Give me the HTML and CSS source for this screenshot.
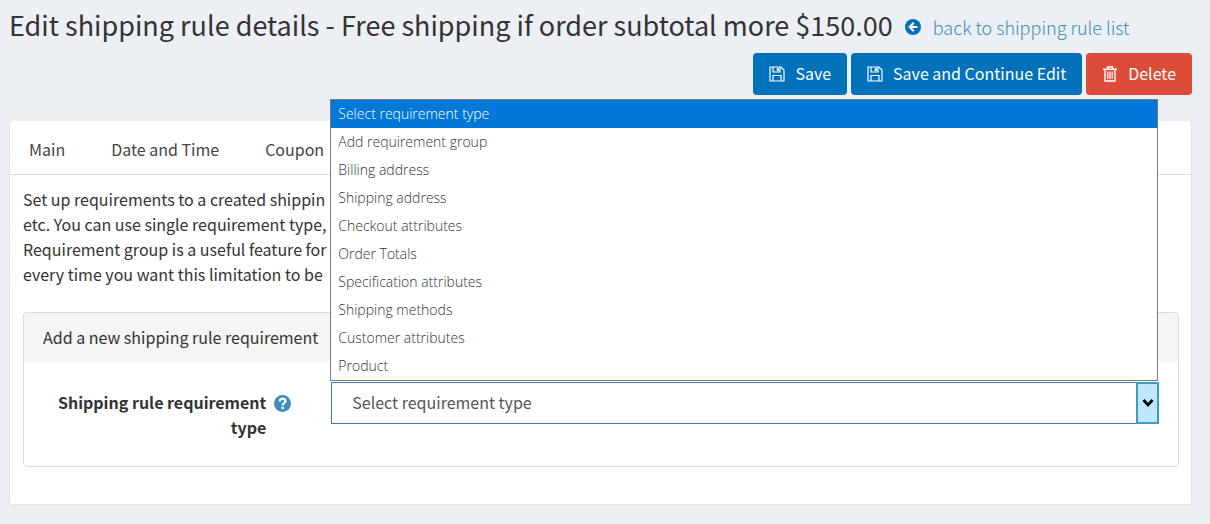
FILE: index.html
```
<!DOCTYPE html>
<html lang="en">
<head>
  <meta charset="UTF-8">
  <title>Edit shipping rule details</title>
  <link rel="stylesheet" href="styles.css">
</head>
<body>
  <header class="content-header">
    <div class="title-row">
      <h1>Edit shipping rule details - Free shipping if order subtotal more $150.00</h1>
      <a href="#" class="back-link">
        <svg class="icon-back" viewBox="0 0 16 16"><circle cx="8" cy="8" r="8" fill="#0072b5"/><path d="M8.8 3.8 4.6 8l4.2 4.2M5 8h7.5" fill="none" stroke="#fff" stroke-width="2"/></svg>
        back to shipping rule list
      </a>
    </div>
    <div class="buttons">
      <button type="button" class="btn btn-blue">
        <svg class="icon" viewBox="0 0 16 16" fill="none" stroke="#fff" stroke-width="1.2"><path d="M1 1h11l3 3v11H1z"/><path d="M4 1v5h7V1M4 15V9.500h8V15"/><path d="M8.800 2v3" stroke-width="2"/></svg>
        Save
      </button>
      <button type="button" class="btn btn-blue">
        <svg class="icon" viewBox="0 0 16 16" fill="none" stroke="#fff" stroke-width="1.2"><path d="M1 1h11l3 3v11H1z"/><path d="M4 1v5h7V1M4 15V9.500h8V15"/><path d="M8.800 2v3" stroke-width="2"/></svg>
        Save and Continue Edit
      </button>
      <button type="button" class="btn btn-red">
        <svg class="icon" viewBox="0 0 16 16" fill="none" stroke="#fff" stroke-width="1.400"><path d="M1 3.200h14M5.500 3V1h5v2"/><path d="M3 3.500V15h10V3.500"/><path d="M5.800 5.500v7.500M8 5.500v7.500M10.200 5.500v7.500" stroke-width="1.200"/></svg>
        Delete
      </button>
    </div>
  </header>

  <main class="card">
    <nav class="tabs">
      <a href="#">Main</a>
      <a href="#">Date and Time</a>
      <a href="#">Coupon</a>
    </nav>
    <div class="tab-content">
      <p class="intro">
        Set up requirements to a created shippin<br>
        etc. You can use single requirement type,<br>
        Requirement group is a useful feature for<br>
        every time you want this limitation to be
      </p>
      <section class="panel">
        <h2>Add a new shipping rule requirement</h2>
        <div class="form-group">
          <div class="label-wrap">
            <label for="requirementType">Shipping rule requirement type</label>
            <svg class="icon-help" viewBox="0 0 18 18"><circle cx="9" cy="9" r="9" fill="#3c8dbc"/><path d="M6 7c0-4 6.200-4 6.200-.6C12.200 8.600 9 8.500 9 11" fill="none" stroke="#fff" stroke-width="2.400"/><path d="M7.800 12.500h2.600v2.500H7.800z" fill="#fff"/></svg>
          </div>
          <div class="select-wrap">
            <select id="requirementType">
              <option>Select requirement type</option>
              <option>Add requirement group</option>
              <option>Billing address</option>
              <option>Shipping address</option>
              <option>Checkout attributes</option>
              <option>Order Totals</option>
              <option>Specification attributes</option>
              <option>Shipping methods</option>
              <option>Customer attributes</option>
              <option>Product</option>
            </select>
            <span class="arrow"><svg viewBox="0 0 12 10"><path d="M1.500 2 6 7l4.500-5" fill="none" stroke="#000" stroke-width="2.800"/></svg></span>
            <ul class="options" role="listbox" aria-label="Shipping rule requirement type">
              <li role="option" aria-selected="true" class="selected">Select requirement type</li>
              <li role="option">Add requirement group</li>
              <li role="option">Billing address</li>
              <li role="option">Shipping address</li>
              <li role="option">Checkout attributes</li>
              <li role="option">Order Totals</li>
              <li role="option">Specification attributes</li>
              <li role="option">Shipping methods</li>
              <li role="option">Customer attributes</li>
              <li role="option">Product</li>
            </ul>
          </div>
        </div>
      </section>
    </div>
  </main>
</body>
</html>
```
FILE: styles.css
```
* {
  box-sizing: border-box;
}

body {
  margin: 0;
  padding: 0 18px 19px 9px;
  background: #ecf0f4;
  color: #333;
  font-family: "Noto Sans CJK SC", "Open Sans", sans-serif;
  font-size: 16px;
  line-height: 25px;
}

.title-row {
  display: flex;
  align-items: center;
  gap: 12px;
  height: 53px;
  padding-bottom: 4px;
}

h1 {
  margin: 0;
  font-size: 27px;
  font-weight: 400;
  white-space: nowrap;
}

.back-link {
  display: flex;
  align-items: center;
  gap: 12px;
  padding-top: 5px;
  color: #3c8dbc;
  font-size: 18px;
  font-weight: 300;
  text-decoration: none;
  white-space: nowrap;
}

.icon-back {
  width: 16px;
  height: 16px;
}

.buttons {
  display: flex;
  justify-content: flex-end;
  gap: 4px;
}

.btn {
  display: flex;
  align-items: center;
  gap: 10px;
  height: 42px;
  padding: 0 16px 1px;
  border: none;
  border-radius: 4px;
  color: #fff;
  font: inherit;
  cursor: pointer;
}

.btn-blue {
  background: #0072bb;
}

.btn-red {
  background: #dd4b39;
}

.icon {
  width: 16px;
  height: 16px;
}

.card {
  margin-top: 26px;
  background: #fff;
  border: 1px solid #dde4ea;
  border-top: none;
  border-radius: 4px;
}

.tabs {
  display: flex;
  gap: 46px;
  padding: 16px 19px 12px;
  border-bottom: 1px solid #ddd;
}

.tabs a {
  color: #444;
  text-decoration: none;
}

.tab-content {
  padding: 12px 12px 37px 13px;
}

.intro {
  margin: 0 0 25px;
}

.panel {
  border: 1px solid #ddd;
  border-radius: 4px;
}

.panel h2 {
  margin: 0;
  padding: 12px 19px;
  background: #f5f5f5;
  border-radius: 4px 4px 0 0;
  font-size: 16px;
  font-weight: 400;
}

.form-group {
  display: grid;
  grid-template-columns: 3fr 10fr;
  gap: 40px;
  padding: 20px 19px 26px;
}

.label-wrap {
  display: flex;
  gap: 8px;
  padding-top: 8px;
  font-weight: 700;
  text-align: right;
}

.label-wrap label {
  flex: 1;
}

.icon-help {
  width: 17px;
  height: 17px;
  margin-top: 5px;
}

.select-wrap {
  position: relative;
}

select {
  display: block;
  width: 100%;
  height: 42px;
  padding: 0 40px 2px 20px;
  appearance: none;
  background: #fff;
  border: 1px solid #3c7fb1;
  border-radius: 0;
  color: #555;
  font: inherit;
}

.arrow {
  position: absolute;
  top: 0;
  right: 0;
  display: flex;
  align-items: center;
  justify-content: center;
  width: 23px;
  height: 42px;
  background: #bee6fd;
  border: 2px solid #3c9cc4;
  pointer-events: none;
}

.arrow svg {
  width: 12px;
  height: 10px;
}

.options {
  position: absolute;
  right: 1px;
  bottom: 100%;
  left: -1px;
  margin: 0 0 1px;
  padding: 0;
  background: #fff;
  border: 1px solid #7a7a7a;
  color: #333;
  font-family: "Open Sans", sans-serif;
  font-size: 14px;
  font-weight: 300;
  line-height: 28px;
  list-style: none;
}

.options li {
  padding: 0 7px;
}

.options .selected {
  background: #0078d7;
  color: #fff;
}
```
